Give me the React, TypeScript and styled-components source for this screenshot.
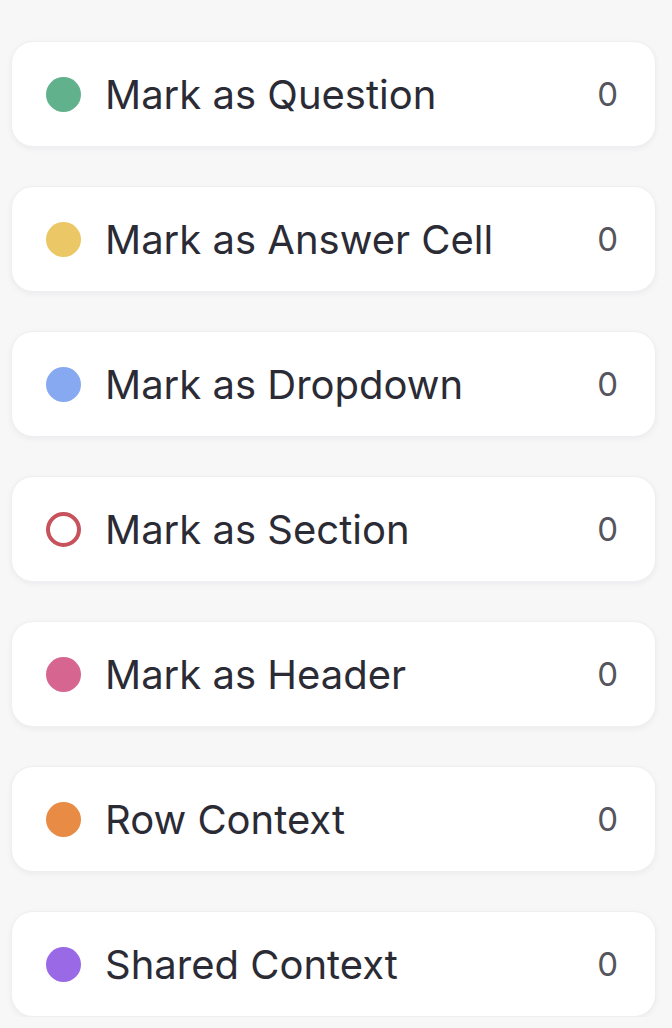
import styled, { createGlobalStyle } from "styled-components";

const GlobalStyle = createGlobalStyle`
  html, body {
    margin: 0;
    padding: 0;
    background: #f7f7f8;
  }
  body {
    font-family: "Inter", "Noto Sans", sans-serif;
  }
`;

interface Marker {
  label: string;
  color: string;
  outline?: boolean;
  count: number;
}

const markers: Marker[] = [
  { label: "Mark as Question", color: "#62b18d", count: 0 },
  { label: "Mark as Answer Cell", color: "#ebc865", count: 0 },
  { label: "Mark as Dropdown", color: "#86a9f1", count: 0 },
  { label: "Mark as Section", color: "#c8525c", outline: true, count: 0 },
  { label: "Mark as Header", color: "#d6668f", count: 0 },
  { label: "Row Context", color: "#e78b45", count: 0 },
  { label: "Shared Context", color: "#9a69e6", count: 0 },
];

export default function App() {
  return (
    <>
      <GlobalStyle />
      <List>
        {markers.map((m) => (
          <Card key={m.label}>
            <Dot $color={m.color} $outline={m.outline} />
            <Label>{m.label}</Label>
            <Count>{m.count}</Count>
          </Card>
        ))}
      </List>
    </>
  );
}

const List = styled.div`
  display: flex;
  flex-direction: column;
  gap: 39px;
  padding: 41px 16px 0 11px;
`;

const Card = styled.div`
  display: flex;
  align-items: center;
  height: 106px;
  box-sizing: border-box;
  padding: 0 37px 0 34px;
  background: #ffffff;
  border-radius: 22px;
  border: 1px solid #efeff1;
  box-shadow: 0 2px 6px rgba(20, 20, 40, 0.05);
`;

const Dot = styled.span<{ $color: string; $outline?: boolean }>`
  flex: none;
  width: 35px;
  height: 35px;
  border-radius: 50%;
  box-sizing: border-box;
  background: ${(p) => (p.$outline ? "transparent" : p.$color)};
  border: ${(p) => (p.$outline ? `4px solid ${p.$color}` : "none")};
`;

const Label = styled.span`
  flex: 1;
  margin-left: 24px;
  font-size: 40px;
  color: #2b2b35;
  white-space: nowrap;
`;

const Count = styled.span`
  font-size: 33px;
  color: #55555e;
`;
